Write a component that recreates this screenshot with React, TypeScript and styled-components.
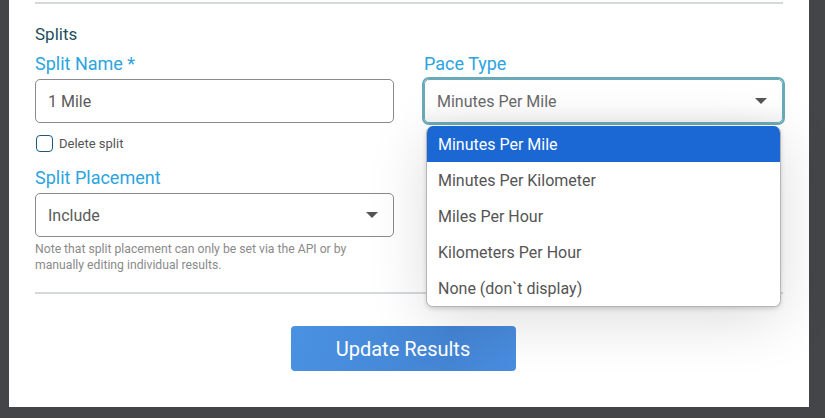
import { createGlobalStyle } from 'styled-components';
import styled from 'styled-components';

const GlobalStyle = createGlobalStyle`
  html, body {
    margin: 0;
    padding: 0;
    background: #444548;
    font-family: Roboto, "Liberation Sans", Arial, sans-serif;
  }
  * { box-sizing: border-box; }
`;

const Page = styled.div`
  width: 825px;
  height: 418px;
  padding-left: 9px;
  overflow: hidden;
`;

const Panel = styled.div`
  position: relative;
  width: 800px;
  height: 407px;
  background: #ffffff;
  padding: 2px 26px 0;
`;

const Rule = styled.div`
  height: 2px;
  background: #d5d9de;
`;

const Heading = styled.div`
  margin-top: 20px;
  font-size: 17px;
  line-height: 20px;
  color: #1e4d5c;
`;

const Columns = styled.div`
  display: grid;
  grid-template-columns: 359px 359px;
  column-gap: 30px;
  margin-top: 9px;
`;

const Column = styled.div`
  display: flex;
  flex-direction: column;
`;

const Label = styled.label<{ $top?: number }>`
  font-size: 18px;
  line-height: 22px;
  color: #2ba4df;
  margin-bottom: 4px;
  margin-top: ${(p) => p.$top ?? 0}px;
`;

const SelectWrap = styled.div`
  position: relative;
`;

const Field = styled.div<{ $focus?: boolean }>`
  height: 44px;
  border: 1px solid ${(p) => (p.$focus ? '#6aa9b7' : '#8a8a8a')};
  border-radius: 5px;
  display: flex;
  align-items: center;
  justify-content: space-between;
  padding: 0 13px 0 12px;
  font-size: 16px;
  color: ${(p) => (p.$focus ? '#6a6a6a' : '#5a5a5a')};
  background: ${(p) => (p.$focus ? 'linear-gradient(#ffffff 60%, #f4f4f4)' : '#fff')};
  box-shadow: ${(p) => (p.$focus ? '0 0 0 2px #6aa9b7' : 'none')};
`;

const Caret = styled.span`
  width: 0;
  height: 0;
  border-left: 6px solid transparent;
  border-right: 6px solid transparent;
  border-top: 6px solid #555;
  margin-right: 2px;
`;

const CheckRow = styled.div`
  display: flex;
  align-items: center;
  gap: 6px;
  margin-top: 11px;
  height: 18px;
  font-size: 13px;
  color: #555;
`;

const Box = styled.span`
  width: 17px;
  height: 17px;
  border: 1.5px solid #1f5a7a;
  border-radius: 4px;
  margin-left: 1px;
`;

const Note = styled.p`
  margin: 4px 0 0;
  width: 340px;
  font-size: 12.2px;
  line-height: 16px;
  color: #8a8a8a;
`;

const Divider = styled.div`
  margin-top: 19px;
  height: 2px;
  background: #d5d9de;
`;

const Actions = styled.div`
  display: flex;
  justify-content: center;
  margin-top: 32px;
  padding-right: 12px;
`;

const Button = styled.button`
  width: 225px;
  height: 45px;
  border: none;
  border-radius: 4px;
  background: linear-gradient(100deg, #4a91e2 0%, #4485d4 70%, #4a8de0 100%);
  color: #ffffff;
  font-family: Roboto, "Liberation Sans", Arial, sans-serif;
  font-size: 20px;
`;

const Menu = styled.ul`
  position: absolute;
  top: calc(100% + 3px);
  left: 2px;
  width: 355px;
  margin: 0;
  padding: 0;
  list-style: none;
  background: #fff;
  border-radius: 7px;
  border: 1px solid #b5b5b5;
  border-top: none;
  overflow: hidden;
  box-shadow: 0 12px 60px rgba(0, 0, 0, 0.14), 0 2px 4px rgba(0, 0, 0, 0.15);
  z-index: 2;
`;

const Option = styled.li<{ $active?: boolean }>`
  height: 36px;
  display: flex;
  align-items: center;
  padding-left: 11px;
  font-size: 16px;
  color: ${(p) => (p.$active ? '#fff' : '#555')};
  background: ${(p) => (p.$active ? '#1b67d3' : '#fff')};
`;

const paceTypes = [
  'Minutes Per Mile',
  'Minutes Per Kilometer',
  'Miles Per Hour',
  'Kilometers Per Hour',
  'None (don`t display)',
];

export default function App() {
  return (
    <>
      <GlobalStyle />
      <Page>
        <Panel>
          <Rule />
          <Heading>Splits</Heading>
          <Columns>
            <Column>
              <Label>Split Name *</Label>
              <Field>1 Mile</Field>
              <CheckRow>
                <Box />
                Delete split
              </CheckRow>
              <Label $top={15}>Split Placement</Label>
              <Field>
                Include
                <Caret />
              </Field>
              <Note>
                Note that split placement can only be set via the API or by manually editing individual results.
              </Note>
            </Column>
            <Column>
              <Label>Pace Type</Label>
              <SelectWrap>
                <Field $focus>
                  Minutes Per Mile
                  <Caret />
                </Field>
                <Menu>
                  {paceTypes.map((t, i) => (
                    <Option key={t} $active={i === 0}>
                      {t}
                    </Option>
                  ))}
                </Menu>
              </SelectWrap>
            </Column>
          </Columns>
          <Divider />
          <Actions>
            <Button>Update Results</Button>
          </Actions>
        </Panel>
      </Page>
    </>
  );
}
